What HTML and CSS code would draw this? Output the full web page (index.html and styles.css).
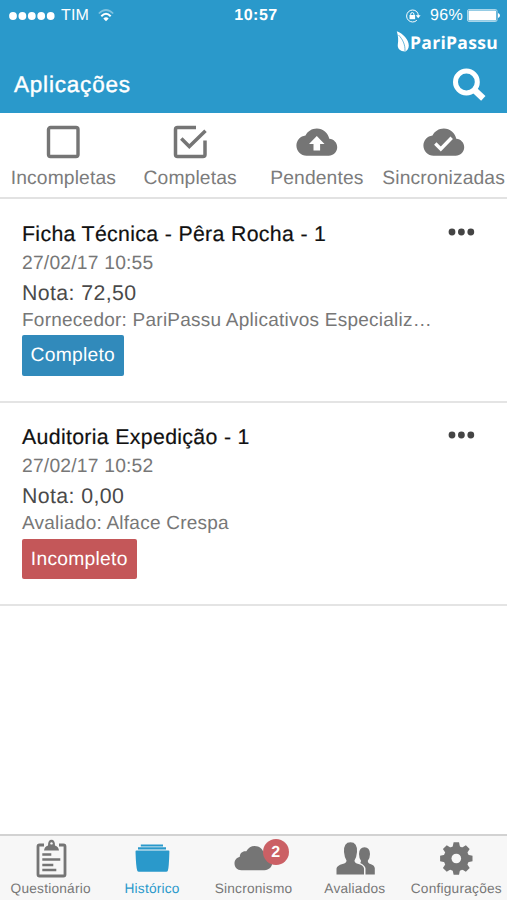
FILE: index.html
```html
<!DOCTYPE html>
<html lang="pt-BR">
<head>
<meta charset="utf-8">
<title>Aplicações</title>
<link rel="stylesheet" href="styles.css">
</head>
<body>
<div class="app">
  <header class="header">
    <div class="status">
      <div class="carrier">
        <svg width="46" height="8" viewBox="0 0 46 8" fill="#fff"><circle cx="4" cy="4" r="3.9"/><circle cx="13.4" cy="4" r="3.9"/><circle cx="22.8" cy="4" r="3.9"/><circle cx="32.2" cy="4" r="3.9"/><circle cx="41.7" cy="4" r="3.9"/></svg>
        <span class="tim">TIM</span>
        <svg class="wifi" width="16" height="13" viewBox="0 0 16 13" fill="none" stroke="#fff" stroke-width="1.7"><path d="M.8 4.5Q8-2.5 15.2 4.5" opacity=".4"/><path d="M3.3 7.2Q8 2.5 12.7 7.2" stroke-width="2"/><path d="M8 12.3 5.3 9.4Q8 7.2 10.7 9.4Z" fill="#fff" stroke="none"/></svg>
      </div>
      <div class="time">10:57</div>
      <div class="power">
        <svg width="16" height="14" viewBox="0 0 16 14" fill="none" stroke="#fff"><path d="M11.8 2.7A6 6 0 1 0 11.8 11.3M11.8 2.7A6 6 0 0 1 13.3 7"/><path d="M10.8 6.2h4.8l-2.4 3Z" fill="#fff" stroke="none"/><rect x="4.5" y="6" width="5.6" height="4.2" fill="#fff" stroke="none"/><path d="M5.7 6V5.2a1.6 1.6 0 0 1 3.2 0V6"/></svg>
        <span class="pct">96%</span>
        <svg width="34" height="13" viewBox="0 0 34 13"><rect x=".5" y=".5" width="29.5" height="12" rx="1.5" fill="none" stroke="#fff" stroke-opacity=".6"/><rect x="1.5" y="1.5" width="27.5" height="10" rx=".5" fill="#fff"/><path d="M31 4v5q2-.6 2-2.500T31 4Z" fill="#fff"/></svg>
      </div>
    </div>
    <div class="brand">
      <svg width="14" height="21" viewBox="0 0 14 21"><path d="M.8.3C7 2.500 12.800 8.500 12.800 14.500c0 3-1.300 5-3.500 6C4 20.300 1.300 17.500 1.800 13.500 2.500 9 2.300 5 .8.300Z" fill="#fff"/><path d="M2.500 4C6.500 8 9.300 13.500 9 20" fill="none" stroke="#2a99cb" stroke-width=".7"/></svg>
      <span>PariPassu</span>
    </div>
    <div class="bar">
      <h1>Aplicações</h1>
      <svg width="34" height="34" viewBox="0 0 34 34" fill="none" stroke="#fff"><circle cx="13.400" cy="14" r="10.900" stroke-width="5"/><path d="M21 21.700l9.300 8.600" stroke-width="6.400"/></svg>
    </div>
  </header>

  <nav class="filters">
    <a><svg width="42" height="40" viewBox="0 0 42 40"><rect x="6.500" y="5.500" width="29.500" height="29" rx="2" fill="none" stroke="#757575" stroke-width="3.400"/></svg><span>Incompletas</span></a>
    <a><svg width="42" height="40" viewBox="0 0 42 40" fill="none" stroke="#757575" stroke-width="3.500"><path d="M27 5.500H8.500Q6.500 5.500 6.500 7.500V32.500Q6.500 34.500 8.500 34.500H34Q36 34.500 36 32.500V18.500"/><path d="M12.300 16.500l8 8L36.500 8.700"/></svg><span>Completas</span></a>
    <a><svg width="42" height="40" viewBox="0 0 42 40"><path transform="translate(.4 -.2) scale(1.700)" d="M19.350 10.040C18.670 6.590 15.640 4 12 4 9.110 4 6.600 5.640 5.350 8.040 2.340 8.360 0 10.910 0 14c0 3.310 2.690 6 6 6h13c2.760 0 5-2.240 5-5 0-2.640-2.050-4.780-4.650-4.960z" fill="#757575"/><path d="M20.800 14l7.700 8h-4.400v6.500h-6.600v-6.500H13Z" fill="#fff"/></svg><span>Pendentes</span></a>
    <a><svg width="42" height="40" viewBox="0 0 42 40"><path transform="translate(.4 -.2) scale(1.700)" d="M19.350 10.040C18.670 6.590 15.640 4 12 4 9.110 4 6.600 5.640 5.350 8.040 2.340 8.360 0 10.910 0 14c0 3.310 2.690 6 6 6h13c2.760 0 5-2.240 5-5 0-2.640-2.050-4.780-4.650-4.960z" fill="#757575"/><path d="M12.300 21.500l5.500 5.500L28.700 15.800" fill="none" stroke="#fff" stroke-width="3.400"/></svg><span>Sincronizadas</span></a>
  </nav>

  <main class="list">
    <article class="item">
      <div class="top"><h2>Ficha Técnica - Pêra Rocha - 1</h2><svg width="27" height="8" viewBox="0 0 27 8" fill="#444"><circle cx="4" cy="4" r="3.400"/><circle cx="13.400" cy="4" r="3.400"/><circle cx="22.800" cy="4" r="3.400"/></svg></div>
      <div class="date">27/02/17 10:55</div>
      <div class="score">Nota: 72,50</div>
      <div class="detail">Fornecedor: PariPassu Aplicativos Especializ…</div>
      <span class="tag complete">Completo</span>
    </article>
    <article class="item">
      <div class="top"><h2>Auditoria Expedição - 1</h2><svg width="27" height="8" viewBox="0 0 27 8" fill="#444"><circle cx="4" cy="4" r="3.400"/><circle cx="13.400" cy="4" r="3.400"/><circle cx="22.800" cy="4" r="3.400"/></svg></div>
      <div class="date">27/02/17 10:52</div>
      <div class="score">Nota: 0,00</div>
      <div class="detail">Avaliado: Alface Crespa</div>
      <span class="tag incomplete">Incompleto</span>
    </article>
  </main>

  <footer class="tabs">
    <a><svg width="42" height="42" viewBox="0 0 42 42"><path d="M14 7H9.500Q8 7 8 8.500V36.500Q8 38 9.500 38H33.500Q35 38 35 36.500V8.500Q35 7 33.500 7H29" fill="none" stroke="#757575" stroke-width="2.800"/><path d="M14 12.500Q14.500 8.500 18 7.500 18 1.800 21.500 1.800T25 7.500Q28.500 8.500 29 12.500Z" fill="#757575"/><circle cx="21.500" cy="5.400" r="1.200" fill="#f7f7f7"/><path d="M12.300 16.500h9M12.300 21.500h18M12.300 27h11M12.300 32h14" stroke="#757575" stroke-width="2.600"/></svg><span>Questionário</span></a>
    <a class="active"><svg width="42" height="42" viewBox="0 0 42 42" fill="#2a99cb"><path d="M9.800 6.500h22.200v1.900H9.800zM7 9.200h28v2.300H7zM5.500 12.500h32q1 0 .9 1-.5 16.500-1.500 19-.3 1.300-1.800 1.300H8q-1.500 0-1.800-1.300Q5 29 4.500 13.500q0-1 1-1Z"/></svg><span>Histórico</span></a>
    <a><svg width="42" height="42" viewBox="0 0 42 42"><path d="M9.500 32.200C5 32.200 2.500 29.200 2.500 25.500 2.500 22 4.700 19.500 7.800 18.700 7.800 15 11 12.500 14.300 13.300 16.300 9.800 19.300 8 22.500 8 27.500 8 31.500 11.500 32 16.200 36.500 16.500 40.300 19.800 40.300 24.300 40.300 28.800 37 32.200 32.500 32.200Z" fill="#757575"/></svg><b class="badge">2</b><span>Sincronismo</span></a>
    <a><svg width="42" height="42" viewBox="0 0 42 42" fill="#757575"><path d="M2.500 36.500v-6q.5-3 6-4.500 4-1 4-3.500Q10.500 19.500 10 14 9.500 4.300 16.500 4.300T23 14q-.5 5.500-2.500 8.500 0 2.500 4 3.500 5 1.300 5.500 4.500v6Z"/><path d="M31.500 36.500v-6q-.3-3-5.300-5.500.8-1 .8-2.300-2-2.700-2-6.700.2-6.800 5.500-6.800T36 16q0 4-2.200 6.700 0 2.500 3.200 3.500 3.500 1.200 3.800 4v6.300Z"/></svg><span>Avaliados</span></a>
    <a><svg width="42" height="42" viewBox="0 0 42 42"><g fill="#757575"><circle cx="21.300" cy="20.500" r="12.600"/><g id="teeth"><path id="tooth" d="M17.600 9l1-4.700h5.400l1 4.700v23l-1 4.700h-5.400l-1-4.700Z"/><use href="#tooth" transform="rotate(45 21.300 20.500)"/></g><use href="#teeth" transform="rotate(90 21.300 20.500)"/></g><circle cx="21.300" cy="20.500" r="4.800" fill="#f7f7f7"/></svg><span>Configurações</span></a>
  </footer>
</div>
</body>
</html>
```
FILE: styles.css
```css
* { box-sizing: border-box; }
body { margin: 0; background: #fff; font-family: "Liberation Sans", Arial, sans-serif; text-rendering: geometricPrecision; }
.app { width: 507px; height: 900px; display: flex; flex-direction: column; overflow: hidden; }
svg { display: block; flex: none; }
.header { height: 113px; background: #2a99cb; color: #fff; flex: none; }
.status { height: 30px; display: grid; grid-template-columns: 1fr auto 1fr; align-items: center; font-size: 16px; line-height: 30px; }
.status span, .time { padding-top: 1px; }
.carrier { display: flex; align-items: center; padding-left: 9px; }
.tim { margin-left: 6px; letter-spacing: .2px; }
.wifi { margin-left: 9px; }
.time { font-weight: 700; letter-spacing: .5px; padding-left: 5px; }
.power { display: flex; align-items: center; justify-content: flex-end; padding-right: 6px; }
.pct { margin: 0 4px 0 9px; letter-spacing: .3px; }
.brand { height: 22px; display: flex; justify-content: flex-end; align-items: center; padding-right: 9px; font: 700 17.5px/24px "Open Sans", sans-serif; letter-spacing: .3px; }
.brand span { padding-top: 3px; }
.bar { height: 61px; display: flex; align-items: center; justify-content: space-between; padding: 4px 20px 0 14px; }
h1 { margin: 0; font-size: 22.5px; font-weight: 400; letter-spacing: .8px; -webkit-text-stroke: .4px #fff; line-height: 28px; }
.filters { height: 86px; flex: none; display: grid; grid-template-columns: repeat(4, 1fr); border-bottom: 2px solid #e2e2e2; padding-top: 9px; }
.filters a { display: flex; flex-direction: column; align-items: center; color: #7c7c7c; font-size: 19.3px; letter-spacing: .12px; line-height: 24px; white-space: nowrap; }
.filters span { margin-top: 5px; }
.list { flex: 1; }
.item { height: 203.5px; border-bottom: 2px solid #e4e4e4; padding: 21px 32px 0 22px; }
.item + .item { padding-top: 20px; }
.top { display: flex; justify-content: space-between; align-items: center; height: 28px; }
.top svg { margin-top: -4px; }
h2 { margin: 0; font-size: 21.3px; font-weight: 400; letter-spacing: .33px; line-height: 28px; color: #111; -webkit-text-stroke: .2px #111; }
.date { font-size: 19.3px; letter-spacing: .2px; line-height: 28px; color: #777; margin-top: 2px; }
.score { font-size: 21.3px; letter-spacing: .4px; line-height: 30px; color: #4a4a4a; }
.detail { font-size: 19px; letter-spacing: .24px; line-height: 24px; color: #777; white-space: nowrap; margin-top: 1px; }
.tag { display: block; width: 101.5px; height: 40.5px; margin-top: 2px; border-radius: 2px; color: #fff; font-size: 19.3px; letter-spacing: .25px; line-height: 42px; text-align: center; }
.item + .item .tag { margin-top: 3px; line-height: 41px; }
.complete { background: #318abb; }
.incomplete { background: #c45759; width: 114.5px; }
.tabs { height: 66px; flex: none; background: #f7f7f7; border-top: 2px solid #d2d2d2; display: grid; grid-template-columns: repeat(5, 1fr); padding-top: 2px; }
.tabs a { position: relative; display: flex; flex-direction: column; align-items: center; color: #777; font-size: 13.7px; letter-spacing: .22px; line-height: 16px; white-space: nowrap; }
.tabs span { margin-top: 1px; }
.tabs .active { color: #2a99cb; }
.badge { position: absolute; left: 60px; top: 1px; width: 26px; height: 26px; border-radius: 50%; background: #cb6065; color: #fff; font-size: 16px; line-height: 27px; text-align: center; letter-spacing: 0; }
```
